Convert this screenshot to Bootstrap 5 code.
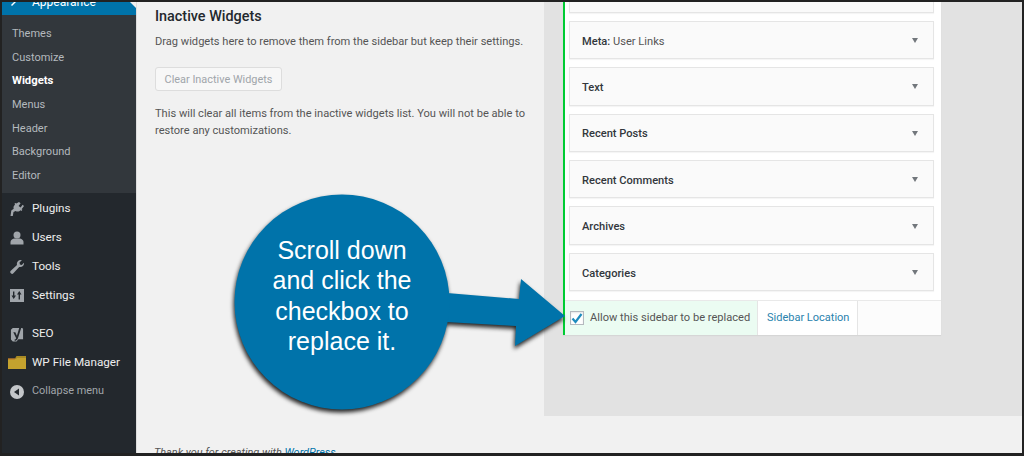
<!doctype html>
<html lang="en"><head><meta charset="utf-8">
<link rel="stylesheet" href="https://cdn.jsdelivr.net/npm/bootstrap@5.3.0/dist/css/bootstrap.min.css">
<style>
html,body{width:1024px;height:456px;overflow:hidden;margin:0;background:#f1f1f1}
body{font-family:Roboto,"Open Sans",sans-serif;font-size:11.1px;color:#555}
.frame{width:1024px;height:456px;border:solid #222;border-width:2px 2px 3px 2px;overflow:hidden;position:relative;background:#f1f1f1}
.side{width:135px;flex:none;background:#23282d;color:#eee;border-right:1px solid #ddd}
.cur{height:13px;background:#0073aa;color:#fff;overflow:hidden;display:flex;align-items:flex-end;padding-left:8px;gap:8px;font-size:12px;line-height:13px;position:relative}
.cur span{position:relative;bottom:6px}
.cur svg{position:relative;bottom:8px}
.curtip{position:absolute;right:0;top:-6px;border:6px solid transparent;border-right-color:#f1f1f1}
.sub{background:#32373c;height:178px;padding-top:6.9px;color:#b4b9be}
.sub div{height:23.7px;line-height:23.7px;padding-left:10px;font-size:11px}
.sub .on{color:#fff;font-weight:700;font-size:11.3px}
.mi{height:29px;display:flex;align-items:center;padding-left:8px;gap:8px;font-size:11.7px;color:#eee;white-space:nowrap}
.mi svg{flex:none}
.main{padding-top:7px;padding-left:18px;width:407px;flex:none}
.ttl{font-size:14.4px;font-weight:500;color:#23282d;line-height:16px;margin:0}
.pg{margin:8px 0 0;line-height:17px;white-space:nowrap}
.clr{margin-top:17px;display:block;width:127px;height:24px;padding:0;border:1px solid #ddd;border-radius:3px;background:#f7f7f7;color:#a0a5aa;font-size:10.9px;line-height:21px}
.foot{position:absolute;left:152px;top:444px;font-style:italic;font-size:10.9px;color:#555;line-height:14px}
.foot a{color:#0073aa;text-decoration:none}
.panel{position:absolute;left:542px;top:0;width:480px;height:414px;background:#e2e2e2;padding-left:19px}
.box{width:378px;height:333px;background:#fff;border-left:2px solid #0c3;box-shadow:0 1px 1px rgba(0,0,0,.05);display:flex;flex-direction:column}
.wlist{flex:1;padding:0 7px 0 4px;margin-top:-27.6px;overflow:hidden}
.wd{height:38.4px;margin-bottom:8px;background:#fafafa;border:1px solid #e5e5e5;display:flex;align-items:center;justify-content:space-between;padding:4px 14px 0 12px;font-weight:500;color:#32373c;font-size:11.1px;box-shadow:0 1px 1px rgba(0,0,0,.04)}
.wd i{font-style:normal;font-weight:400;color:#555}
.tri{width:0;height:0;border:3.5px solid transparent;border-top:5px solid #72777c;border-bottom:0;margin-right:1px;margin-top:-3px}
.rowb{height:35px;border-top:1px solid #e9e9e9;display:flex;flex:none;background:#fcfcfc}
.c1{width:193px;background:#ebfcf2;border-right:1px solid #e5e5e5;display:flex;align-items:center;padding-left:5px;gap:6px;color:#555;font-size:11.1px;white-space:nowrap}
.cbx{width:14px;height:14px;border:1px solid #b4b9be;background:#fff;flex:none;box-shadow:inset 0 1px 2px rgba(0,0,0,.1);display:flex;align-items:center;justify-content:center}
.c2{width:100px;border-right:1px solid #e5e5e5;background:#fff;display:flex;align-items:center;padding-left:9px;color:#2a82ad;font-size:11px;white-space:nowrap}
.shape{position:absolute;left:229px;top:188px;width:340px;height:226px;filter:drop-shadow(-1px 3px 2px rgba(0,0,0,.85))}
.say{position:absolute;left:231px;top:233px;width:218px;text-align:center;color:#fff;font-family:"Liberation Sans",Arial,sans-serif;font-size:25px;line-height:30.3px}
</style></head>
<body>
<div class="frame d-flex">
  <nav class="side d-flex flex-column">
    <div class="cur">
      <svg width="14" height="14" viewBox="0 0 14 14" fill="#fff"><path d="M1 12l7-7 1 1-7 7z"/><path d="M7 2c2-2 5-1 6 1l-3 2 1 1 2-1c0 3-3 4-5 3z"/></svg>
      <span>Appearance</span><b class="curtip"></b>
    </div>
    <div class="sub">
      <div>Themes</div><div>Customize</div><div class="on">Widgets</div><div>Menus</div><div>Header</div><div>Background</div><div>Editor</div>
    </div>
    <div class="d-flex flex-column pt-px-fix" style="padding-top:1px">
      <div class="mi"><svg width="14" height="14" viewBox="0 0 14 14" fill="#a0a5aa"><path d="M9 0l1.600 1.200L8.600 4l2 1.400 2-2.600L14 4l-2.400 3.200 .8.600-.8 1.100-1-.7c-1.300 1.500-3.500 1.800-5 .8L3.500 10 2.800 14 .5 14 1.300 8.500 3.700 6.800c-.5-1.500 0-3.100 1.400-4.100l-.7-1L5.500 1l.8.600z"/></svg><span>Plugins</span></div>
      <div class="mi"><svg width="14" height="14" viewBox="0 0 14 14" fill="#a0a5aa"><circle cx="7" cy="4" r="3.500"/><path d="M.5 13.500V11c0-2 2.500-3.500 4-3.500h5c1.500 0 4 1.500 4 3.500v2.500z"/></svg><span>Users</span></div>
      <div class="mi"><svg width="14" height="14" viewBox="0 0 14 14" fill="#a0a5aa"><path d="M14 3.500c0 2.500-2.400 4.200-4.800 3.400L3.400 13.200a1.700 1.700 0 0 1-2.600-2.400L7 5C6.300 2.500 8 0 10.500 0c.5 0 1 .1 1.300.3L9.500 2.600l.4 1.900 1.900.5 2.100-2.300c.1.300.1.500.1.800z"/></svg><span>Tools</span></div>
      <div class="mi"><svg width="14" height="13" viewBox="0 0 14 13"><rect width="14" height="13" fill="#a0a5aa"/><path d="M3 2.500h1.400v4H6L3.700 10 1.500 6.500H3zM10 10.500H8.600v-5H7L9.300 2l2.200 3.500H10z" fill="#23282d"/></svg><span>Settings</span></div>
      <div class="mi" style="margin-top:9px"><svg width="14" height="16" viewBox="0 0 15 17"><path d="M3 2h10l1 1v11l-5 0-2 2.500-4 0-2-2V4z" fill="#a0a5aa"/><path d="M10.500 0h2.200L8.500 13c-.5 1.500-1.500 2.500-3.200 3l-.6-1.400c1-.3 1.600-.8 1.900-1.600L3.500 6.500h2.200l1.700 4z" fill="#23282d"/></svg><span>SEO</span></div>
      <div class="mi" style="padding-left:6px;gap:6px"><svg width="18" height="13" viewBox="0 0 18 13"><path d="M0 2.500h7L8.500 0H18v3H0z" fill="#a88a25"/><path d="M0 3h8l1-1h9v11H0z" fill="#c4a22e"/><path d="M0 2.500h7v1H0z" fill="#c0702a"/></svg><span>WP File Manager</span></div>
      <div class="mi" style="color:#a0a5aa;font-size:10.9px"><svg width="14" height="14" viewBox="0 0 14 14"><circle cx="7" cy="7" r="7" fill="#c3c6c9"/><path d="M9 3.500v7L4 7z" fill="#23282d"/></svg><span>Collapse menu</span></div>
    </div>
  </nav>
  <section class="main">
    <h2 class="ttl">Inactive Widgets</h2>
    <p class="pg">Drag widgets here to remove them from the sidebar but keep their settings.</p>
    <button class="clr" type="button">Clear Inactive Widgets</button>
    <p class="pg" style="margin-top:14px;white-space:normal">This will clear all items from the inactive widgets list. You will not be able to restore any customizations.</p>
  </section>
  <section class="panel">
    <div class="box">
      <div class="wlist">
        <div class="wd"></div>
        <div class="wd"><span>Meta: <i>User Links</i></span><b class="tri"></b></div>
        <div class="wd"><span>Text</span><b class="tri"></b></div>
        <div class="wd"><span>Recent Posts</span><b class="tri"></b></div>
        <div class="wd"><span>Recent Comments</span><b class="tri"></b></div>
        <div class="wd"><span>Archives</span><b class="tri"></b></div>
        <div class="wd"><span>Categories</span><b class="tri"></b></div>
      </div>
      <div class="rowb">
        <div class="c1"><span class="cbx"><svg width="12" height="11" viewBox="0 0 12 11"><path d="M1.500 5.500l3 3.500 6-8" fill="none" stroke="#1e8cbe" stroke-width="2.200"/></svg></span><span>Allow this sidebar to be replaced</span></div>
        <div class="c2">Sidebar Location</div>
      </div>
    </div>
  </section>
  <div class="foot">Thank you for creating with <a href="#">WordPress</a>.</div>
  <svg class="shape" viewBox="229 188 340 226"><path d="M445 291l72 6 2-20 44 37-50 30 1-20-70-4z" fill="#0073aa"/><circle cx="340" cy="300" r="107.500" fill="#0073aa"/></svg>
  <div class="say">Scroll down<br>and click the<br>checkbox to<br>replace it.</div>
</div>
<script src="https://cdn.jsdelivr.net/npm/bootstrap@5.3.0/dist/js/bootstrap.bundle.min.js"></script>
</body></html>
